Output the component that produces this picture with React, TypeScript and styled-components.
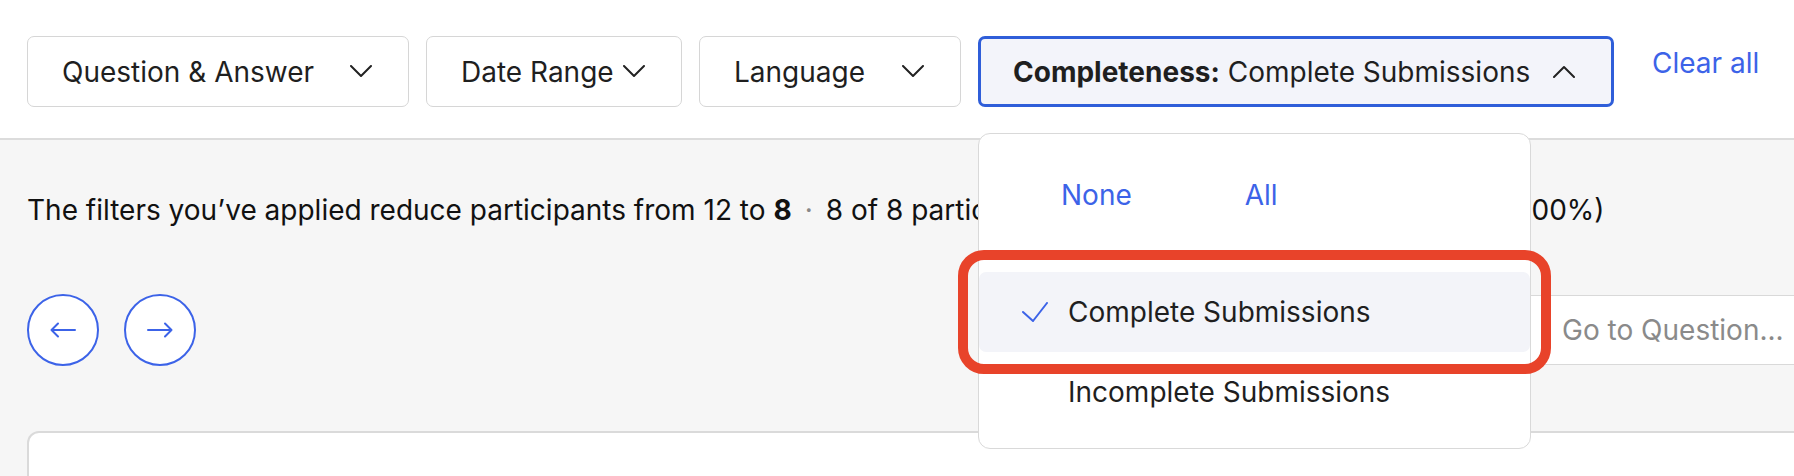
import React from "react";
import styled, { createGlobalStyle } from "styled-components";

const GlobalStyle = createGlobalStyle`
  html, body {
    margin: 0;
    padding: 0;
    overflow: hidden;
    background: #ffffff;
  }
  body {
    font-family: Inter, "Noto Sans", "Liberation Sans", sans-serif;
    color: #1c1c1c;
  }
`;

const Page = styled.div`
  width: 1860px;
  height: 476px;
  display: flex;
  flex-direction: column;
  overflow: hidden;
`;

const Header = styled.header`
  position: relative;
  z-index: 2;
  height: 140px;
  box-sizing: border-box;
  padding: 36px 27px 0;
  background: #ffffff;
  border-bottom: 2px solid #dcdcdc;
  display: flex;
  align-items: flex-start;
  gap: 17px;
`;

const FilterWrap = styled.div`
  position: relative;
`;

const FilterButton = styled.button<{ $width: number; $active?: boolean }>`
  width: ${(p) => p.$width}px;
  height: 71px;
  box-sizing: border-box;
  padding: 0 36px 0 ${(p) => (p.$active ? 32 : 34)}px;
  display: flex;
  align-items: center;
  justify-content: space-between;
  gap: 8px;
  white-space: nowrap;
  font-family: inherit;
  font-size: 28px;
  color: #1f1f1f;
  background: ${(p) => (p.$active ? "#f3f4fa" : "#ffffff")};
  border: ${(p) => (p.$active ? "3px solid #2f5ed9" : "1.5px solid #d6d6d6")};
  border-radius: 7px;
  cursor: pointer;

  b {
    font-weight: 700;
  }
`;

const Chevron = ({ up }: { up?: boolean }) => (
  <svg width="22" height="13" viewBox="0 0 22 13" fill="none">
    <path
      d={up ? "M1 12 L11 2 L21 12" : "M1 1 L11 11 L21 1"}
      stroke="#222"
      strokeWidth="2"
      strokeLinecap="round"
      strokeLinejoin="round"
    />
  </svg>
);

const ClearAll = styled.a`
  margin: 10px 0 0 21px;
  font-size: 28px;
  line-height: 34px;
  color: #3c63e8;
  text-decoration: none;
  white-space: nowrap;
`;

const Dropdown = styled.div`
  position: absolute;
  top: calc(100% + 26px);
  left: 0;
  width: 553px;
  box-sizing: border-box;
  padding: 0 0 16px;
  background: #ffffff;
  border: 1.5px solid #d9d9d9;
  border-radius: 12px;
`;

const ActionRow = styled.div`
  display: flex;
  gap: 113px;
  padding: 44px 0 60px 82px;
  font-size: 28px;
  line-height: 34px;
  color: #3c63e8;
`;

const Option = styled.div<{ $selected?: boolean }>`
  height: 80px;
  display: flex;
  align-items: center;
  gap: 20px;
  padding-left: 43px;
  border-radius: 7px;
  background: ${(p) => (p.$selected ? "#f3f4f9" : "transparent")};
  font-size: 28px;
  color: #1f1f1f;
  white-space: nowrap;
`;

const CheckSlot = styled.span`
  width: 26px;
  height: 20px;
  display: inline-flex;
`;

const Highlight = styled.div`
  position: absolute;
  left: -21px;
  top: 116px;
  width: 593px;
  height: 124px;
  box-sizing: border-box;
  border: 10px solid #e8432a;
  border-radius: 26px;
  pointer-events: none;
`;

const Main = styled.main`
  flex: 1;
  background: #f6f6f6;
  padding: 53px 27px 0;
  display: flex;
  flex-direction: column;
`;

const Summary = styled.p`
  margin: 0;
  font-size: 28px;
  line-height: 34px;
  color: #111;
  white-space: nowrap;

  b {
    font-weight: 700;
  }
`;

const Dot = styled.span`
  color: #888;
  margin: 0 13px;
`;

const NavRow = styled.div`
  margin-top: 67px;
  display: flex;
  align-items: center;
  gap: 25px;
`;

const RoundButton = styled.button`
  width: 72px;
  height: 72px;
  border-radius: 50%;
  border: 2px solid #3c63e8;
  background: #ffffff;
  display: flex;
  align-items: center;
  justify-content: center;
  padding: 0;
  cursor: pointer;
`;

const Arrow = ({ right }: { right?: boolean }) => (
  <svg
    width="26"
    height="16"
    viewBox="0 0 26 16"
    fill="none"
    style={right ? { transform: "scaleX(-1)" } : undefined}
  >
    <path
      d="M1.5 8 H25 M8 1.5 L1.5 8 L8 14.5"
      stroke="#3c63e8"
      strokeWidth="2"
      strokeLinecap="round"
      strokeLinejoin="round"
    />
  </svg>
);

const GoTo = styled.input`
  margin-left: auto;
  width: 313px;
  height: 70px;
  box-sizing: border-box;
  padding: 0 0 0 41px;
  border: 1.5px solid #d9d9d9;
  border-radius: 7px;
  background: #ffffff;
  font-family: inherit;
  font-size: 28px;
  color: #1f1f1f;

  &::placeholder {
    color: #8a8a8a;
  }
`;

const Card = styled.section`
  margin-top: 65px;
  flex: 1;
  background: #ffffff;
  border: 2px solid #dadada;
  border-bottom: none;
  border-radius: 12px 12px 0 0;
`;

export default function App() {
  return (
    <Page>
      <GlobalStyle />
      <Header>
        <FilterButton $width={382}>
          Question &amp; Answer <Chevron />
        </FilterButton>
        <FilterButton $width={256}>
          Date Range <Chevron />
        </FilterButton>
        <FilterButton $width={262}>
          Language <Chevron />
        </FilterButton>
        <FilterWrap>
          <FilterButton $width={636} $active>
            <span>
              <b>Completeness:</b> Complete Submissions
            </span>
            <Chevron up />
          </FilterButton>
          <Dropdown>
            <ActionRow>
              <span>None</span>
              <span>All</span>
            </ActionRow>
            <Option $selected>
              <CheckSlot>
                <svg width="26" height="20" viewBox="0 0 26 20" fill="none">
                  <path
                    d="M1 10 L11 19 L25 1"
                    stroke="#3c63e8"
                    strokeWidth="2"
                    strokeLinecap="round"
                    strokeLinejoin="round"
                  />
                </svg>
              </CheckSlot>
              Complete Submissions
            </Option>
            <Option>
              <CheckSlot />
              Incomplete Submissions
            </Option>
            <Highlight />
          </Dropdown>
        </FilterWrap>
        <ClearAll href="#">Clear all</ClearAll>
      </Header>
      <Main>
        <Summary>
          The filters you’ve applied reduce participants from 12 to <b>8</b>
          <Dot>·</Dot>8 of 8 participants answered this selected question (100%)
        </Summary>
        <NavRow>
          <RoundButton aria-label="Previous">
            <Arrow />
          </RoundButton>
          <RoundButton aria-label="Next">
            <Arrow right />
          </RoundButton>
          <GoTo placeholder="Go to Question..." />
        </NavRow>
        <Card />
      </Main>
    </Page>
  );
}
